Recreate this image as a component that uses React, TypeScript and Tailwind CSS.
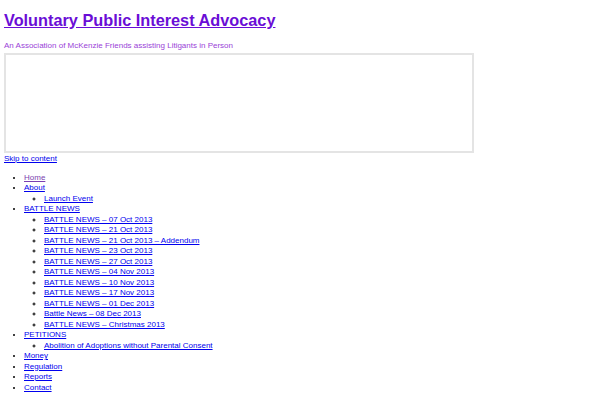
const battle = [
  "BATTLE NEWS – 07 Oct 2013",
  "BATTLE NEWS – 21 Oct 2013",
  "BATTLE NEWS – 21 Oct 2013 – Addendum",
  "BATTLE NEWS – 23 Oct 2013",
  "BATTLE NEWS – 27 Oct 2013",
  "BATTLE NEWS – 04 Nov 2013",
  "BATTLE NEWS – 10 Nov 2013",
  "BATTLE NEWS – 17 Nov 2013",
  "BATTLE NEWS – 01 Dec 2013",
  "Battle News – 08 Dec 2013",
  "BATTLE NEWS – Christmas 2013",
];

function Link({ children, visited }: { children: React.ReactNode; visited?: boolean }) {
  return (
    <a href="#" className={visited ? "text-[#7b3fb0] underline" : "text-[#0000ee] underline"}>
      {children}
    </a>
  );
}

function Sub({ items }: { items: string[] }) {
  return (
    <ul className="list-[circle] pl-[20px]">
      {items.map((t) => (
        <li key={t}>
          <Link>{t}</Link>
        </li>
      ))}
    </ul>
  );
}

export default function App() {
  return (
    <div className="bg-white min-h-[400px] px-[4px] text-[8px] leading-[10.5px] text-black" style={{ fontFamily: '"Liberation Sans", Arial, sans-serif' }}>
      <h1 className="pt-[11px] text-[16.3px] leading-[19px] font-bold">
        <a href="#" className="text-[#6a0dd6] underline">Voluntary Public Interest Advocacy</a>
      </h1>
      <p className="mt-[11px] text-[#9a3fd8]">An Association of McKenzie Friends assisting Litigants in Person</p>
      <div className="mt-[1px] h-[100px] w-[470px] border-2 border-[#e4e4e4]" />
      <div className="mt-[1px]">
        <Link>Skip to content</Link>
      </div>
      <ul className="mt-[8.5px] list-disc pl-[20px]">
        <li><Link visited>Home</Link></li>
        <li>
          <Link>About</Link>
          <Sub items={["Launch Event"]} />
        </li>
        <li>
          <Link>BATTLE NEWS</Link>
          <Sub items={battle} />
        </li>
        <li>
          <Link>PETITIONS</Link>
          <Sub items={["Abolition of Adoptions without Parental Consent"]} />
        </li>
        <li><Link>Money</Link></li>
        <li><Link>Regulation</Link></li>
        <li><Link>Reports</Link></li>
        <li><Link>Contact</Link></li>
      </ul>
    </div>
  );
}
